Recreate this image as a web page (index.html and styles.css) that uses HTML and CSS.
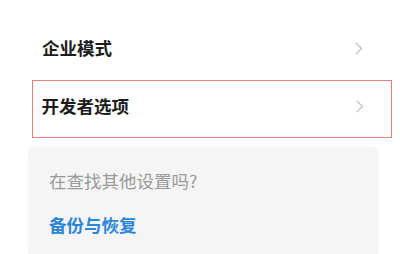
FILE: index.html
```html
<!DOCTYPE html>
<html lang="zh-CN">
<head>
<meta charset="utf-8">
<link rel="stylesheet" href="styles.css">
</head>
<body>
<div class="page">
  <div class="list">
    <div class="row">
      <span class="label">企业模式</span>
      <svg class="chev" width="8" height="13" viewBox="0 0 8 13"><path d="M1.2 1.2 L6.5 6.5 L1.2 11.8" fill="none" stroke="#c4c4c4" stroke-width="1.4" stroke-linecap="round" stroke-linejoin="round"/></svg>
    </div>
    <div class="row row-hl">
      <span class="label">开发者选项</span>
      <svg class="chev" width="8" height="13" viewBox="0 0 8 13"><path d="M1.2 1.2 L6.5 6.5 L1.2 11.8" fill="none" stroke="#c4c4c4" stroke-width="1.4" stroke-linecap="round" stroke-linejoin="round"/></svg>
    </div>
  </div>
  <div class="card">
    <div class="hint">在查找其他设置吗?</div>
    <div class="link">备份与恢复</div>
  </div>
</div>
</body>
</html>
```

FILE: styles.css
```css
html, body {
  margin: 0;
  padding: 0;
  background: #ffffff;
}
body {
  width: 400px;
  height: 254px;
  overflow: hidden;
  font-family: "Noto Sans CJK SC", "Noto Sans", sans-serif;
}
.page {
  display: flex;
  flex-direction: column;
}
.list {
  margin: 19px 0 0 32px;
  width: 360px;
  display: flex;
  flex-direction: column;
  gap: 3px;
}
.row {
  height: 58px;
  box-sizing: border-box;
  display: flex;
  align-items: center;
  justify-content: space-between;
  padding: 0 29px 0 10px;
}
.row-hl {
  border: 1.5px solid #e8817a;
  padding: 0 27.5px 6px 8.5px;
}
.label {
  font-size: 17.5px;
  font-weight: 700;
  color: #1c1c1c;
  line-height: 24px;
}
.chev {
  display: block;
}
.card {
  margin: 9px 0 0 28px;
  width: 350px;
  height: 107px;
  box-sizing: border-box;
  background: #f5f5f5;
  border-radius: 6px 6px 0 0;
  box-shadow: 0 0 4px rgba(0,0,0,0.03);
  padding: 22px 0 0 21px;
  display: flex;
  flex-direction: column;
  gap: 20px;
}
.hint {
  font-size: 17.5px;
  color: #9a9a9a;
  line-height: 24px;
}
.link {
  font-size: 17.5px;
  font-weight: 700;
  color: #2b86d6;
  line-height: 24px;
}
```
